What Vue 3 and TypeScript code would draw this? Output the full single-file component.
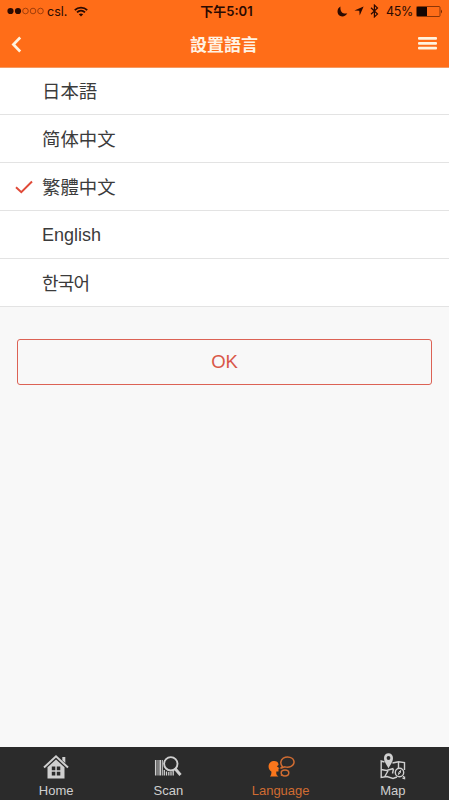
<script setup lang="ts">
import { ref } from 'vue'

interface Language {
  code: string
  label: string
}

const languages: Language[] = [
  { code: 'ja', label: '日本語' },
  { code: 'zh-Hans', label: '简体中文' },
  { code: 'zh-Hant', label: '繁體中文' },
  { code: 'en', label: 'English' },
  { code: 'ko', label: '한국어' },
]

const tabs: string[] = ['Home', 'Scan', 'Language', 'Map']
const selected = ref('zh-Hant')
const activeTab = ref('Language')
</script>

<template>
  <div class="screen">
    <header class="header">
      <div class="status">
        <div class="status-left">
          <svg class="signal" width="38" height="8" viewBox="0 0 38 8">
            <circle cx="3.5" cy="4" r="3.1" fill="#2b0a02" />
            <circle cx="11" cy="4" r="3.1" fill="#2b0a02" />
            <g fill="none" stroke="#8a3308" stroke-width=".8">
              <circle cx="18.5" cy="4" r="2.8" />
              <circle cx="26" cy="4" r="2.8" />
              <circle cx="33.5" cy="4" r="2.8" />
            </g>
          </svg>
          <span class="carrier">csl.</span>
          <svg class="wifi" width="14" height="11" viewBox="0 0 14 11" fill="none" stroke="#2b0a02" stroke-width="1.8">
            <path d="M.8 4.1C4.2.7 9.8.7 13.2 4.1M3 6.4C5.3 4.2 8.7 4.2 11 6.4" />
            <path d="M7 10.5 4.8 8.3Q7 6.5 9.2 8.3Z" fill="#2b0a02" stroke="none" />
          </svg>
        </div>
        <span class="time">下午5:01</span>
        <div class="status-right">
          <svg width="11" height="11" viewBox="0 0 11 11">
            <path d="M3.5.5C-.3 2.3-.4 7.8 2.8 9.7C5.7 11.3 9 10 10.3 7.2C7 8.5 2.7 6.5 3.5.5Z" fill="#2b0a02" />
          </svg>
          <svg class="arrow" width="10" height="10" viewBox="0 0 10 10">
            <path d="M9.6.4 5.7 9.5 5.3 4.8.4 4.5Z" fill="#2b0a02" />
          </svg>
          <svg class="bluetooth" width="9" height="14" viewBox="0 0 9 14">
            <path d="M1 3.7 7.5 10 4.4 12.9V1.1L7.5 4 1 10.3" fill="none" stroke="#2b0a02" stroke-width="1.2" />
          </svg>
          <span class="percent">45%</span>
          <svg class="battery" width="27" height="11" viewBox="0 0 27 11">
            <rect x=".5" y=".5" width="23.5" height="10" rx="1" fill="none" stroke="#6e2804" stroke-width=".8" />
            <rect x="1" y="1" width="10" height="9" fill="#160603" />
            <path d="M25 3.5Q27 5.5 25 7.5Z" fill="#6e2804" />
          </svg>
        </div>
      </div>
      <div class="navbar">
        <button class="icon-button" aria-label="Back">
          <svg width="11" height="17" viewBox="0 0 11 17">
            <path d="M9.2 1.5 2.4 8.5 9.2 15.5" fill="none" stroke="#fff3df" stroke-width="2.7" />
          </svg>
        </button>
        <h1 class="title">設置語言</h1>
        <button class="icon-button" aria-label="Menu">
          <svg width="19" height="14" viewBox="0 0 19 14" fill="#fff3df">
            <rect y="0" width="19" height="2.8" rx="1" />
            <rect y="4.9" width="19" height="2.8" rx="1" />
            <rect y="9.8" width="19" height="2.8" rx="1" />
          </svg>
        </button>
      </div>
    </header>

    <main class="content">
      <ul class="languages">
        <li v-for="lang in languages" :key="lang.code" class="language" :lang="lang.code" @click="selected = lang.code">
          <span class="mark">
            <svg v-if="selected === lang.code" width="18" height="14" viewBox="0 0 18 14">
              <path d="M1 7.3 6.3 12.2 17 1.5" fill="none" stroke="#e04a38" stroke-width="2" />
            </svg>
          </span>
          <span class="name">{{ lang.label }}</span>
        </li>
      </ul>
      <button class="ok">OK</button>
    </main>

    <nav class="tabs">
      <button v-for="tab in tabs" :key="tab" class="tab" :class="{ active: tab === activeTab }" @click="activeTab = tab">
        <svg v-if="tab === 'Home'" class="tab-icon" viewBox="0 0 28 28">
          <path d="M2 14.5 14 3.3 26 14.5" fill="none" stroke="currentColor" stroke-width="2" />
          <path d="M20.3 4H23.3V10L20.3 7.2Z" fill="currentColor" />
          <path d="M5.5 14.3 14 6.5 22.5 14.3V25.5H5.5Z" fill="currentColor" />
          <path d="M9.8 13.5H13.3V17.2H9.8ZM14.8 13.5H18.3V17.2H14.8ZM9.8 18.7H13.3V22.4H9.8ZM14.8 18.7H18.3V22.4H14.8Z" fill="#2b2b2b" />
        </svg>
        <svg v-else-if="tab === 'Scan'" class="tab-icon" viewBox="0 0 28 28" fill="none" stroke="currentColor">
          <path d="M1.7 7V22.5" stroke-width="1.5" />
          <path d="M4 7V22.5M8.3 7V22.5" stroke-width="1" />
          <path d="M6.2 7V22.5" stroke-width="1.7" />
          <path d="M10.3 17V22.5M12.5 18.5V22.5M14.8 19V22.5M17 18.8V22.5M19.2 18V22.5" stroke-width="1.3" />
          <path d="M10.5 7V9" stroke-width="1" />
          <circle cx="16.8" cy="10.8" r="6.7" stroke-width="1.9" />
          <path d="M21.2 15.8 26.5 22" stroke-width="2.9" />
        </svg>
        <svg v-else-if="tab === 'Language'" class="tab-icon" viewBox="0 0 28 28">
          <path d="M3 23.5Q4.8 21.5 4.3 18.5C-.2 15.3 1.1 8.5 6.5 8C9.7 7.8 11.7 9.3 11.5 12L9.8 13.3L12.7 15.5H11.5V18.5H9.3V20.7Q9.4 22.5 11.5 23.5Z" fill="#fa761c" />
          <path d="M15.5 13.7C12.8 10.8 13.5 7 16.3 5.2C20.3 3 26.5 4.1 27 8.7C27.3 13.2 22 15 18 13.9L13.5 15.3Z" fill="none" stroke="currentColor" stroke-width="1.5" />
          <ellipse cx="18" cy="20" rx="3.8" ry="2.9" fill="none" stroke="currentColor" stroke-width="1.5" />
          <path d="M15 21.2 13.4 23.1 17 22.8Z" fill="currentColor" />
        </svg>
        <svg v-else class="tab-icon" viewBox="0 0 28 28" fill="none" stroke="currentColor" stroke-width="1.4">
          <path d="M5.5 9 2.2 8V24.5L8 23.5 14 25.5 18 24M13.5 10 19.5 8.7 25.5 9.5V17M25.5 23.5V25.5L23.5 25M2.2 16.5 7.5 17.5 14.5 15.5M5.5 24 9.5 17M14.5 16 13.5 20.5M19.5 9V15" />
          <path d="M9.5 15.5C8.5 12.5 5 9.5 5 5.1C5 2.2 7 .3 9.5.3S14 2.2 14 5.1C14 9.5 10.5 12.5 9.5 15.5Z" fill="currentColor" stroke="none" />
          <circle cx="9.5" cy="5" r="1.9" fill="#2b2b2b" stroke="none" />
          <circle cx="20.5" cy="19.5" r="4.2" />
          <path d="M19.5 21.5 20 19 21.7 17.5 21.2 20ZM23.5 22.5 26 25" stroke-width="1" />
        </svg>
        <span class="tab-label">{{ tab }}</span>
      </button>
    </nav>
  </div>
</template>

<style>
body {
  margin: 0;
}
</style>

<style scoped>
.screen {
  display: flex;
  flex-direction: column;
  height: 100vh;
  overflow: hidden;
  background: #f8f8f8;
  font-family: 'Liberation Sans', 'Noto Sans CJK JP', sans-serif;
}

button {
  margin: 0;
  padding: 0;
  border: 0;
  background: none;
  font-family: inherit;
}

svg {
  display: block;
}

.header {
  height: 67px;
  background: #ff6d18;
  border-bottom: 1px solid #f49a63;
  box-sizing: content-box;
}

.status {
  display: grid;
  grid-template-columns: 1fr auto 1fr;
  align-items: center;
  height: 22px;
  padding: 0 6px 0 7px;
  color: #2b0a02;
}

.status-left,
.status-right {
  display: flex;
  align-items: center;
}

.status-right {
  justify-content: flex-end;
}

.carrier {
  margin: 1px 0 0 2px;
  font: 12.5px/21px Inter, sans-serif;
}

.wifi {
  margin-left: 7px;
}

.time {
  padding: 1px 0 0 3px;
  font: 600 13px/21px Inter, 'Noto Sans CJK TC', sans-serif;
}

.arrow {
  margin-left: 6px;
}

.bluetooth {
  margin-left: 6px;
}

.percent {
  margin: 1px 3px 0 7px;
  font: 12.5px/21px Inter, sans-serif;
  letter-spacing: -0.3px;
}

.navbar {
  display: flex;
  align-items: center;
  justify-content: space-between;
  height: 44px;
  padding: 0 12px 0 11px;
}

.icon-button {
  display: flex;
  width: 19px;
}

.title {
  margin: 0;
  padding-bottom: 2px;
  color: #fff3e4;
  font: 700 17px/41px 'Noto Sans CJK TC', sans-serif;
}

.content {
  flex: 1;
}

.languages {
  margin: 0;
  padding: 0;
  list-style: none;
  background: #fff;
}

.language {
  display: flex;
  align-items: center;
  box-sizing: border-box;
  height: 48px;
  padding-left: 15px;
  border-bottom: 1px solid #e3e3e3;
  color: #3b3b3b;
  font: 18.4px/47px 'Noto Sans CJK TC', sans-serif;
}

.language:lang(ja) {
  height: 47px;
  font: 18.4px/44px 'Noto Sans CJK JP', sans-serif;
}

.language:lang(ja) .name,
.language:lang(ko) .name {
  padding-bottom: 2px;
}

.language:lang(zh-Hans) {
  font-family: 'Noto Sans CJK SC', sans-serif;
}

.language:lang(en) {
  font: 18px/47px 'Liberation Sans', sans-serif;
}

.language:lang(en) .name {
  padding-top: 2px;
}

.language:lang(ko) {
  font: 18px/46px 'Noto Sans CJK KR', sans-serif;
  letter-spacing: -0.8px;
}

.mark {
  width: 27px;
}

.ok {
  display: block;
  box-sizing: border-box;
  width: calc(100% - 34px);
  height: 46px;
  margin: 32px 17px 0;
  border: 1px solid #dc6255;
  border-radius: 3px;
  color: #d95749;
  font-size: 18.5px;
}

.tabs {
  display: grid;
  grid-template-columns: repeat(4, 1fr);
  height: 53px;
  background: #2b2b2b;
}

.tab {
  display: flex;
  flex-direction: column;
  align-items: center;
  padding-top: 6px;
  color: #cfcfcf;
}

.tab.active {
  color: #d06c32;
}

.tab-icon {
  width: 28px;
  height: 28px;
}

.tab-label {
  margin-top: 2px;
  font-size: 13px;
  line-height: 15px;
}
</style>
